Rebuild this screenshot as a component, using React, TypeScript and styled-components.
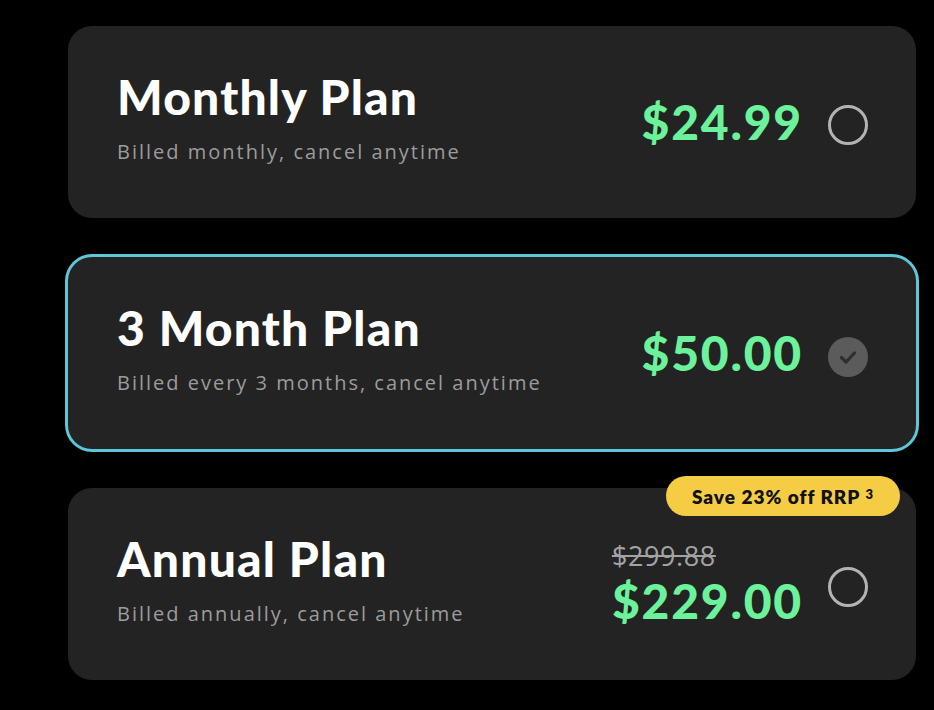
import styled, { createGlobalStyle } from "styled-components";

const GlobalStyle = createGlobalStyle`
  html, body {
    margin: 0;
    padding: 0;
    background: #000;
  }
  body {
    font-family: "Lato", "Noto Sans", sans-serif;
    -webkit-font-smoothing: antialiased;
  }
`;

type Plan = {
  title: string;
  note: string;
  price: string;
  oldPrice?: string;
  badge?: string;
  selected?: boolean;
};

const plans: Plan[] = [
  { title: "Monthly Plan", note: "Billed monthly, cancel anytime", price: "$24.99" },
  {
    title: "3 Month Plan",
    note: "Billed every 3 months, cancel anytime",
    price: "$50.00",
    selected: true,
  },
  {
    title: "Annual Plan",
    note: "Billed annually, cancel anytime",
    price: "$229.00",
    oldPrice: "$299.88",
    badge: "Save 23% off RRP",
  },
];

export default function App() {
  return (
    <>
      <GlobalStyle />
      <List>
        {plans.map((p) => (
          <Card key={p.title} $selected={p.selected}>
            {p.badge && (
              <Badge>
                {p.badge} <sup>3</sup>
              </Badge>
            )}
            <Info>
              <Title>{p.title}</Title>
              <Note>{p.note}</Note>
            </Info>
            <Right>
              <PriceBox>
                {p.oldPrice && <OldPrice>{p.oldPrice}</OldPrice>}
                <Price>{p.price}</Price>
              </PriceBox>
              {p.selected ? (
                <Checked>
                  <svg width="24" height="24" viewBox="0 0 24 24">
                    <path
                      d="M5.5 12.5l4.5 4.5L18.5 8"
                      fill="none"
                      stroke="#2e2e2e"
                      strokeWidth="3.2"
                      strokeLinecap="round"
                      strokeLinejoin="round"
                    />
                  </svg>
                </Checked>
              ) : (
                <Radio />
              )}
            </Right>
          </Card>
        ))}
      </List>
    </>
  );
}

const List = styled.div`
  display: flex;
  flex-direction: column;
  gap: 39px;
  padding: 26px 0 0 68px;
  width: 848px;
`;

const Card = styled.div<{ $selected?: boolean }>`
  position: relative;
  box-sizing: border-box;
  height: 192px;
  background: #232323;
  border-radius: 24px;
  padding: 0 48px 0 49px;
  display: flex;
  align-items: center;
  justify-content: space-between;
  box-shadow: ${(p) => (p.$selected ? "0 0 0 3px #5ec6d6" : "none")};
`;

const Info = styled.div`
  display: flex;
  flex-direction: column;
  gap: 16px;
  margin-bottom: 8px;
`;

const Title = styled.div`
  color: #fff;
  font-size: 48px;
  font-weight: 900;
  line-height: 52px;
  letter-spacing: 1.2px;
`;

const Note = styled.div`
  color: #9c9c9c;
  font-family: "Open Sans", "Lato", sans-serif;
  font-size: 20px;
  line-height: 26px;
  letter-spacing: 2px;
`;

const Right = styled.div`
  display: flex;
  align-items: center;
  gap: 25px;
`;

const PriceBox = styled.div`
  display: flex;
  flex-direction: column;
  align-items: flex-start;
`;

const OldPrice = styled.div`
  color: #a3a3a3;
  font-family: "Open Sans", "Lato", sans-serif;
  font-size: 27px;
  line-height: 28px;
  letter-spacing: 0.6px;
  text-decoration: line-through;
  margin-bottom: 5px;
`;

const Price = styled.div`
  color: #6cf29b;
  font-size: 48px;
  font-weight: 900;
  line-height: 52px;
  letter-spacing: 1.8px;
`;

const Radio = styled.div`
  box-sizing: border-box;
  width: 40px;
  height: 40px;
  border-radius: 50%;
  border: 3px solid #b3b3b3;
  margin-top: 6px;
`;

const Checked = styled.div`
  width: 40px;
  height: 40px;
  border-radius: 50%;
  background: #5b5b5b;
  display: flex;
  align-items: center;
  justify-content: center;
  margin-top: 8px;
`;

const Badge = styled.div`
  position: absolute;
  top: -12px;
  right: 16px;
  height: 40px;
  padding: 0 26px;
  border-radius: 20px;
  background: #f5cd45;
  color: #111;
  font-size: 19px;
  font-weight: 800;
  letter-spacing: 1px;
  display: flex;
  align-items: center;

  sup {
    font-size: 13px;
    margin-left: 5px;
    position: relative;
    top: -2px;
  }
`;
